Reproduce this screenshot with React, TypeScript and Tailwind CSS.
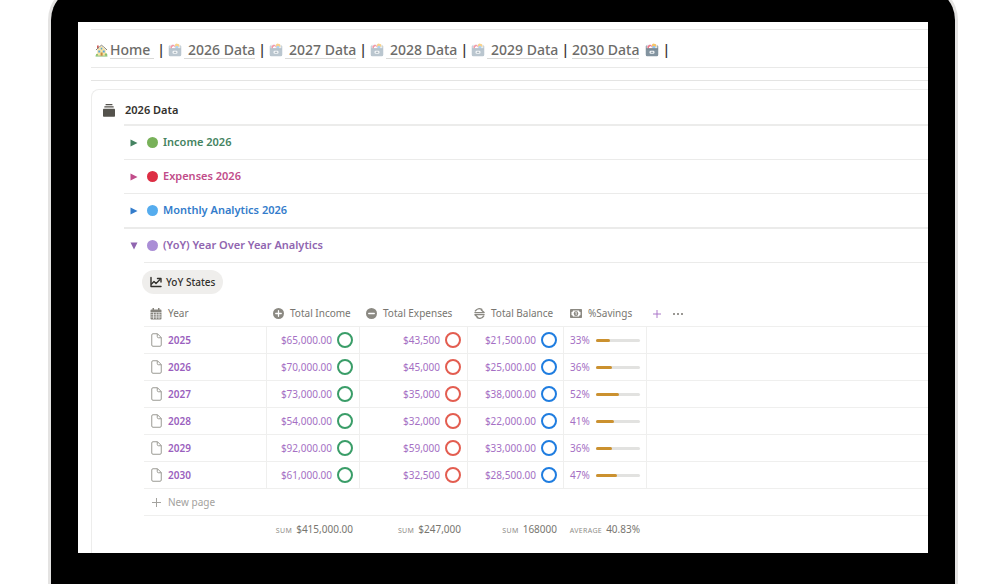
import { useState } from "react";
import type { ReactNode } from "react";

type Row = {
  year: string;
  income: string;
  expenses: string;
  balance: string;
  savings: number;
};

const rows: Row[] = [
  { year: "2025", income: "$65,000.00", expenses: "$43,500", balance: "$21,500.00", savings: 33 },
  { year: "2026", income: "$70,000.00", expenses: "$45,000", balance: "$25,000.00", savings: 36 },
  { year: "2027", income: "$73,000.00", expenses: "$35,000", balance: "$38,000.00", savings: 52 },
  { year: "2028", income: "$54,000.00", expenses: "$32,000", balance: "$22,000.00", savings: 41 },
  { year: "2029", income: "$92,000.00", expenses: "$59,000", balance: "$33,000.00", savings: 36 },
  { year: "2030", income: "$61,000.00", expenses: "$32,500", balance: "$28,500.00", savings: 47 },
];

function HouseIcon() {
  return (
    <svg viewBox="0 0 26 26" className="size-[13px] shrink-0" aria-hidden="true">
      <rect x="1" y="22.500" width="24" height="2.500" rx="1.200" fill="#7cb768" />
      <path d="M4.500 12 13 4l8.500 8v11h-17z" fill="#f8e4a4" />
      <rect x="4" y="3" width="3.500" height="6" fill="#d0605a" />
      <path d="M2.500 11.500 9 5.500l4-3 4 3 6.500 6" fill="none" stroke="#85827a" strokeWidth="2" strokeLinecap="round" strokeLinejoin="round" />
      <rect x="6.500" y="13" width="4" height="4" fill="#58a6de" />
      <rect x="15.500" y="13" width="4" height="4" fill="#58a6de" />
      <rect x="11.200" y="17" width="4" height="6.500" fill="#c68a45" />
      <rect x="11.500" y="7.500" width="3" height="3.500" fill="#58a6de" />
      <circle cx="22" cy="21" r="2.400" fill="#8ac06b" />
      <circle cx="4" cy="21.500" r="2" fill="#8ac06b" />
    </svg>
  );
}

function CardBoxIcon({ strong = false }: { strong?: boolean }) {
  return (
    <svg viewBox="0 0 28 28" className={strong ? "size-3.5 shrink-0" : "size-3.5 shrink-0 opacity-75"} aria-hidden="true">
      <path d="M3.500 3.500h21V12h-21z" fill="#e3eaef" />
      <path d="m14 3 2.500-2 5.500 1.500 1 5h-9z" fill="#f9c466" />
      <path d="m5 6 5-3 4 3 1 5H5z" fill="#f0788a" />
      <path d="m8 8 4-2 3 5H8z" fill="#fff" />
      <path d="m15 7 3-1.500L20.500 7v4H15z" fill="#8ec5f0" />
      <path d="M1.500 6.500 3.500 4v7h21V4l2 2.500v17a3 3 0 0 1-3 3h-19a3 3 0 0 1-3-3z" fill={strong ? "#82939f" : "#a3b4c0"} />
      <path d="M2.500 11h23v1.500h-23z" fill={strong ? "#66757f" : "#8fa1ae"} />
      <rect x="9" y="15.500" width="10" height="6" rx="2.500" fill="#f1f4f6" />
      <rect x="11.500" y="17.500" width="5" height="2" rx="1" fill="#7b8b96" />
    </svg>
  );
}

function StackIcon() {
  return (
    <svg viewBox="0 0 24 26" className="h-[13px] w-3 shrink-0 fill-[#54524c]" aria-hidden="true">
      <rect x="5" y="0" width="14" height="2.400" rx="1" />
      <rect x="2.500" y="4.500" width="19" height="2.600" rx="1" />
      <rect x="0" y="9.500" width="24" height="16" rx="1.500" />
    </svg>
  );
}

function ChartIcon() {
  return (
    <svg viewBox="0 0 24 24" className="size-3 shrink-0" fill="none" stroke="#32302c" strokeWidth="2.800" strokeLinecap="round" strokeLinejoin="round" aria-hidden="true">
      <path d="M2 3v18h20" />
      <path d="m3 16 5-5 4 4 8-8" />
      <path d="M15 5h7v7" />
    </svg>
  );
}

function CalendarIcon() {
  return (
    <svg viewBox="0 0 24 24" className="size-3 shrink-0" aria-hidden="true">
      <path d="M5 0h3v3h8V0h3v3h2a2 2 0 0 1 2 2v3H1V5a2 2 0 0 1 2-2h2z" fill="#85837c" />
      <path d="M1 9h22v12a2 2 0 0 1-2 2H3a2 2 0 0 1-2-2z" fill="#85837c" />
      <path d="M1 13.500h22M1 18h22M7 9v13M12.500 9v13M18 9v13" stroke="#fff" strokeWidth="1.300" />
    </svg>
  );
}

function PlusCircleIcon() {
  return (
    <svg viewBox="0 0 24 24" className="size-[11px] shrink-0" aria-hidden="true">
      <circle cx="12" cy="12" r="12" fill="#8b8982" />
      <path d="M12 6v12M6 12h12" stroke="#fff" strokeWidth="2.800" strokeLinecap="round" />
    </svg>
  );
}

function MinusCircleIcon() {
  return (
    <svg viewBox="0 0 24 24" className="size-[11px] shrink-0" aria-hidden="true">
      <circle cx="12" cy="12" r="12" fill="#8b8982" />
      <path d="M6 12h12" stroke="#fff" strokeWidth="3" strokeLinecap="round" />
    </svg>
  );
}

function BalanceIcon() {
  return (
    <svg viewBox="0 0 24 24" className="size-[11px] shrink-0" fill="none" stroke="#8b8982" strokeWidth="3" strokeLinecap="round" strokeLinejoin="round" aria-hidden="true">
      <path d="M3 6.500A10.300 10.300 0 0 1 17 3" />
      <path d="M2 10h20l-6-5.500" />
      <path d="M22 14.500H2L8 20" />
      <path d="M21 17.500A10.300 10.300 0 0 1 7 21" />
    </svg>
  );
}

function CashIcon() {
  return (
    <svg viewBox="0 0 24 18" className="h-[9px] w-3 shrink-0" aria-hidden="true">
      <rect width="24" height="18" rx="1.500" fill="#8b8982" />
      <path d="M6 3h12a3 3 0 0 0 3 3v6a3 3 0 0 0-3 3H6a3 3 0 0 0-3-3V6a3 3 0 0 0 3-3z" fill="#fff" />
      <ellipse cx="12" cy="9" rx="4.500" ry="5" fill="#8b8982" />
      <path d="M10.800 6.500 12.400 6v6" stroke="#fff" strokeWidth="1.500" fill="none" />
    </svg>
  );
}

function PageIcon() {
  return (
    <svg viewBox="0 0 22 28" className="h-3.5 w-[11px] shrink-0" fill="none" stroke="#9b9a94" strokeWidth="2" strokeLinejoin="round" aria-hidden="true">
      <path d="M4 1.500h9L20.500 9v15a2.500 2.500 0 0 1-2.500 2.500H4A2.500 2.500 0 0 1 1.500 24V4A2.500 2.500 0 0 1 4 1.500z" />
      <path d="M12.500 1.500V7A2.500 2.500 0 0 0 15 9.500h5.500" />
    </svg>
  );
}

function PlusIcon({ className }: { className: string }) {
  return (
    <svg viewBox="0 0 16 16" className={className} fill="none" stroke="currentColor" strokeWidth="1.800" aria-hidden="true">
      <path d="M8 0v16M0 8h16" />
    </svg>
  );
}

function Bar() {
  return <span className="font-semibold text-[#3b3a37]">|</span>;
}

function NavLink({ children }: { children: ReactNode }) {
  return (
    <a href="#" className="border-b border-[#d9d9d7] pl-1 leading-4">
      {children}
    </a>
  );
}

type ToggleProps = {
  label: string;
  text: string;
  dot: string;
  open: boolean;
  onToggle: () => void;
};

function Toggle({ label, text, dot, open, onToggle }: ToggleProps) {
  return (
    <button
      type="button"
      aria-expanded={open}
      onClick={onToggle}
      className={`flex h-[33px] w-full items-center text-left text-[11px] font-semibold ${text}`}
    >
      <svg viewBox="0 0 8 8" className={open ? "ml-1.5 size-2 rotate-90 fill-current" : "ml-1.5 size-2 fill-current"} aria-hidden="true">
        <path d="M0.500 0.500 7.500 4 0.500 7.500z" />
      </svg>
      <span className={`ml-[9px] size-[11px] rounded-full ${dot}`} />
      <span className="ml-[5px]">{label}</span>
    </button>
  );
}

function HeadCell({ icon, label }: { icon: ReactNode; label: string }) {
  return (
    <th scope="col" className="border-b border-[#efefee] pl-1.5 text-left font-normal">
      <div className="flex items-center gap-1.5 whitespace-nowrap">
        {icon}
        {label}
      </div>
    </th>
  );
}

function MoneyCell({ value, ring }: { value: string; ring: string }) {
  return (
    <td className="border-r border-b border-[#efefee] pr-1.5">
      <div className="flex items-center justify-end gap-[5px]">
        {value}
        <span className={`size-4 rounded-full border-2 ${ring}`} />
      </div>
    </td>
  );
}

function TotalCell({ label, value }: { label: string; value: string }) {
  return (
    <td className="pr-[7px] text-right whitespace-nowrap">
      <span className="mr-1 text-[7px] tracking-wider text-[#8f8e89]">{label}</span>
      {value}
    </td>
  );
}

function YearTable() {
  return (
    <table className="w-full table-fixed border-separate border-spacing-0 text-[10px] text-[#787670]">
      <colgroup>
        <col className="w-[123px]" />
        <col className="w-[93px]" />
        <col className="w-[108px]" />
        <col className="w-24" />
        <col className="w-[83px]" />
        <col />
      </colgroup>
      <thead>
        <tr className="h-[26px]">
          <HeadCell icon={<CalendarIcon />} label="Year" />
          <HeadCell icon={<PlusCircleIcon />} label="Total Income" />
          <HeadCell icon={<MinusCircleIcon />} label="Total Expenses" />
          <HeadCell icon={<BalanceIcon />} label="Total Balance" />
          <HeadCell icon={<CashIcon />} label="%Savings" />
          <th className="border-b border-[#efefee] pl-1.5">
            <div className="flex items-center gap-3">
              <button type="button" aria-label="Add property" className="text-[#a46cc4]">
                <PlusIcon className="size-2" />
              </button>
              <button type="button" aria-label="More options">
                <svg viewBox="0 0 20 4" className="h-0.5 w-2.5 fill-[#787670]" aria-hidden="true">
                  <circle cx="2" cy="2" r="2" />
                  <circle cx="10" cy="2" r="2" />
                  <circle cx="18" cy="2" r="2" />
                </svg>
              </button>
            </div>
          </th>
        </tr>
      </thead>
      <tbody className="text-[#a56fc4]">
        {rows.map((row) => (
          <tr key={row.year} className="h-[27px]">
            <th scope="row" className="border-r border-b border-[#efefee] pl-[7px] text-left font-semibold text-[#9a5fbe]">
              <div className="flex items-center gap-1.5">
                <PageIcon />
                {row.year}
              </div>
            </th>
            <MoneyCell value={row.income} ring="border-[#3a9d68]" />
            <MoneyCell value={row.expenses} ring="border-[#e35d50]" />
            <MoneyCell value={row.balance} ring="border-[#1f7de0]" />
            <td className="border-r border-b border-[#efefee] px-1.5">
              <div className="flex items-center gap-1.5">
                {row.savings}%
                <div className="h-[3px] flex-1 rounded-full bg-[#e2e2e0]">
                  <div className="h-full rounded-full bg-[#cb912f]" style={{ width: `${row.savings}%` }} />
                </div>
              </div>
            </td>
            <td className="border-b border-[#efefee]" />
          </tr>
        ))}
      </tbody>
      <tfoot>
        <tr className="h-[27px]">
          <td colSpan={6} className="border-b border-[#efefee] pl-2 text-[#a3a29e]">
            <button type="button" className="flex items-center gap-[7px]">
              <PlusIcon className="size-[9px]" />
              New page
            </button>
          </td>
        </tr>
        <tr className="h-[26px]">
          <td />
          <TotalCell label="SUM" value="$415,000.00" />
          <TotalCell label="SUM" value="$247,000" />
          <TotalCell label="SUM" value="168000" />
          <TotalCell label="AVERAGE" value="40.83%" />
          <td />
        </tr>
      </tfoot>
    </table>
  );
}

const sections = [
  { label: "Income 2026", text: "text-[#448361]", dot: "bg-[#78b159]", line: "border-b" },
  { label: "Expenses 2026", text: "text-[#c14c8a]", dot: "bg-[#dd2e44]", line: "border-b" },
  { label: "Monthly Analytics 2026", text: "text-[#337ccb]", dot: "bg-[#55acee]", line: "border-b-2" },
  { label: "(YoY) Year Over Year Analytics", text: "text-[#9065b0]", dot: "bg-[#aa8ed6]", line: "" },
];

export default function App() {
  const [open, setOpen] = useState([false, false, false, true]);
  const toggle = (index: number) => setOpen(open.map((value, i) => (i === index ? !value : value)));

  return (
    <div className="flex h-screen flex-col overflow-hidden bg-white pr-[47px] pl-12 font-['Noto_Sans','Open_Sans',sans-serif]">
      <div className="-mt-4 flex flex-1 flex-col rounded-t-[36px] border-x-[3px] border-t-[3px] border-[#e4e3e2] bg-black px-[27px] pt-[35px] pb-[31px]">
        <main className="flex-1 overflow-hidden bg-white pt-[7px] pl-[13px]">
          <nav className="flex h-[39px] items-center gap-[3px] border-y border-[#e9e9e8] pt-[3px] pl-1 text-sm font-medium whitespace-nowrap text-[#6d6c69]">
            <span className="flex items-center gap-0.5">
              <HouseIcon />
              <a href="#" className="border-b border-[#d9d9d7] pr-1 leading-4">Home</a>
            </span>
            <Bar />
            {["2026 Data", "2027 Data", "2028 Data", "2029 Data"].map((name) => (
              <span key={name} className="flex items-center gap-[3px]">
                <span className="flex items-center gap-0.5">
                  <CardBoxIcon />
                  <NavLink>{name}</NavLink>
                </span>
                <Bar />
              </span>
            ))}
            <span className="flex items-center gap-1.5">
              <a href="#" className="border-b border-[#d9d9d7] leading-4">2030 Data</a>
              <CardBoxIcon strong />
            </span>
            <Bar />
          </nav>
          <div className="h-[13px] border-b border-[#e4e4e3]" />
          <section className="mt-2 h-full rounded-tl-lg border-t border-l border-[#ededec] pl-[11px]">
            <div className="flex h-[34px] items-end">
              <h1 className="flex h-7 items-center gap-2.5 text-[11px] font-semibold text-[#32302c]">
                <StackIcon />
                2026 Data
              </h1>
            </div>
            <div className="ml-[21px] border-t-2 border-[#ececeb]">
              {sections.map((section, index) => (
                <div key={section.label} className={`border-[#ebebea] ${section.line}`}>
                  <Toggle
                    label={section.label}
                    text={section.text}
                    dot={section.dot}
                    open={open[index]}
                    onToggle={() => toggle(index)}
                  />
                </div>
              ))}
              {open[3] && (
                <div className="ml-5 border-t border-[#ebebea] pt-[7px]">
                  <button type="button" className="-ml-0.5 flex h-6 items-center gap-1 rounded-full bg-[#efeeec] px-2 text-[10px] font-medium text-[#32302c]">
                    <ChartIcon />
                    YoY States
                  </button>
                  <div className="pt-[7px]">
                    <YearTable />
                  </div>
                </div>
              )}
            </div>
          </section>
        </main>
      </div>
    </div>
  );
}
